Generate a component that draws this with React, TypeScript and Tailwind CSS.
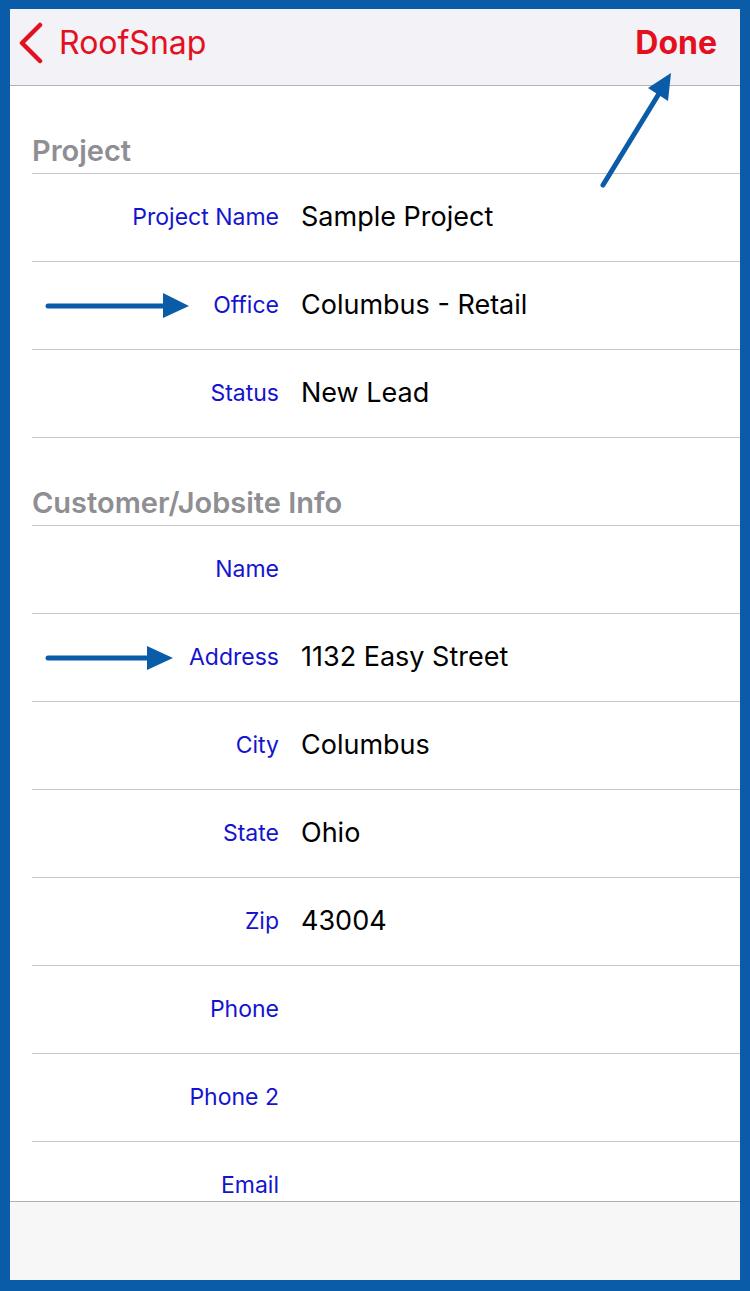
const projectRows = [
  { label: "Project Name", value: "Sample Project" },
  { label: "Office", value: "Columbus - Retail" },
  { label: "Status", value: "New Lead" },
];

const customerRows = [
  { label: "Name", value: "" },
  { label: "Address", value: "1132 Easy Street" },
  { label: "City", value: "Columbus" },
  { label: "State", value: "Ohio" },
  { label: "Zip", value: "43004" },
  { label: "Phone", value: "" },
  { label: "Phone 2", value: "" },
  { label: "Email", value: "" },
];

function SectionHeader({ title }: { title: string }) {
  return (
    <div className="ml-[22px] h-[88px] flex items-end pb-[8px] border-b border-[#c8c7cc]">
      <h2 className="text-[29px] leading-none font-semibold text-[#8e8e93]">{title}</h2>
    </div>
  );
}

function FieldRow({ label, value }: { label: string; value: string }) {
  return (
    <div className="ml-[22px] h-[88px] shrink-0 flex items-center border-b border-[#c8c7cc]">
      <span className="w-[247px] text-right text-[23px] text-[#1414cf]">{label}</span>
      <span className="ml-[22px] text-[27px] text-black">{value}</span>
    </div>
  );
}

export default function App() {
  return (
    <div
      className="relative w-[750px] h-[1291px] bg-[#0b5ca8] pl-[10px] pr-[10px] pt-[9px] pb-[11px]"
      style={{ fontFamily: "Inter, 'Noto Sans', sans-serif" }}
    >
      <div className="h-full flex flex-col bg-white overflow-hidden">
        {/* Nav bar */}
        <div className="h-[77px] shrink-0 flex items-center justify-between bg-[#f2f2f7] border-b border-[#b2b2b2] pl-[8px] pr-[23px] pb-[9px]">
          <div className="flex items-center text-[#e3101f]">
            <svg width="26" height="42" viewBox="0 0 26 42" fill="none">
              <polyline points="22,3 4,21 22,39" stroke="currentColor" strokeWidth="4.5" strokeLinecap="round" strokeLinejoin="round" />
            </svg>
            <span className="ml-[15px] text-[32px]">RoofSnap</span>
          </div>
          <button className="text-[32px] font-bold text-[#e3101f]">Done</button>
        </div>

        {/* Form */}
        <div className="flex-1 overflow-hidden">
          <SectionHeader title="Project" />
          {projectRows.map((r) => (
            <FieldRow key={r.label} label={r.label} value={r.value} />
          ))}
          <SectionHeader title="Customer/Jobsite Info" />
          {customerRows.map((r) => (
            <FieldRow key={r.label} label={r.label} value={r.value} />
          ))}
        </div>

        {/* Toolbar */}
        <div className="h-[79px] shrink-0 bg-[#f7f7f7] border-t border-[#b2b2b2]" />
      </div>

      {/* annotation arrows */}
      <svg className="absolute inset-0 pointer-events-none" width="750" height="1291">
        <line x1="603" y1="185" x2="660" y2="92" stroke="#0b5ca8" strokeWidth="5" strokeLinecap="round" />
        <polygon points="671,73 648,88 668,101" fill="#0b5ca8" />
        <line x1="48" y1="306" x2="166" y2="306" stroke="#0b5ca8" strokeWidth="5" strokeLinecap="round" />
        <polygon points="163,293 189,306 163,318" fill="#0b5ca8" />
        <line x1="48" y1="658" x2="150" y2="658" stroke="#0b5ca8" strokeWidth="5" strokeLinecap="round" />
        <polygon points="147,646 173,658 147,670" fill="#0b5ca8" />
      </svg>
    </div>
  );
}
